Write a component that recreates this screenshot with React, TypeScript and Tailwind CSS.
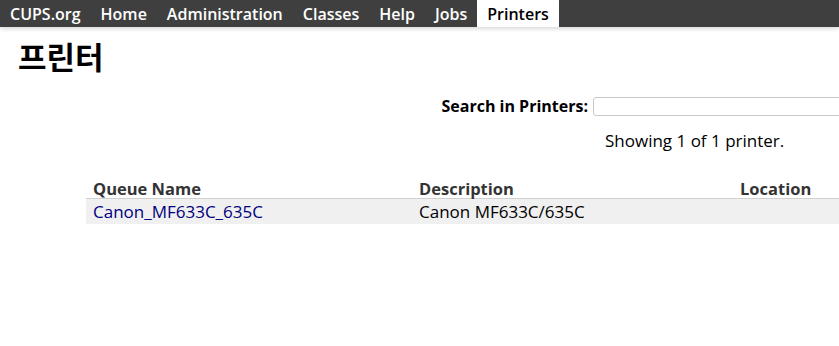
const navItems = [
  { label: "CUPS.org", href: "#" },
  { label: "Home", href: "#" },
  { label: "Administration", href: "#" },
  { label: "Classes", href: "#" },
  { label: "Help", href: "#" },
  { label: "Jobs", href: "#" },
  { label: "Printers", href: "#", active: true },
];

const printers = [
  { name: "Canon_MF633C_635C", description: "Canon MF633C/635C", location: "" },
];

export default function App() {
  return (
    <div
      className="w-full h-[346px] overflow-hidden bg-white text-[#000]"
      style={{ fontFamily: '"Open Sans", "Noto Sans CJK KR", sans-serif' }}
    >
      {/* Top nav */}
      <nav className="h-[27px] bg-[#3f3f3f] shadow-[0_2px_4px_rgba(0,0,0,0.15)] flex items-stretch">
        {navItems.map((item) => (
          <a
            key={item.label}
            href={item.href}
            className={`flex items-center px-[10px] text-[16px] font-semibold leading-none ${
              item.active ? "bg-white text-black" : "text-white"
            }`}
          >
            {item.label}
          </a>
        ))}
      </nav>

      {/* Page title */}
      <h1
        className="mt-[11px] ml-[18px] text-[31px] font-bold leading-[36px] text-black"
        style={{ fontFamily: '"Noto Sans CJK KR", sans-serif' }}
      >
        프린터
      </h1>

      {/* Search */}
      <div className="mt-[20px] flex items-center justify-end gap-[5px] -mr-[40px]">
        <label className="text-[16px] font-bold text-black">Search in Printers:</label>
        <input
          type="search"
          className="w-[286px] h-[19px] border border-[#c8c8c8] rounded-[3px] bg-white"
        />
      </div>

      {/* Count */}
      <p className="mt-[13px] ml-[605px] text-[17px] text-black leading-[20px] whitespace-nowrap">
        Showing 1 of 1 printer.
      </p>

      {/* Table */}
      <div className="mt-[26px] ml-[86px] w-[780px]">
        <div className="grid grid-cols-[326px_321px_1fr] border-b border-[#d0d0d0] h-[22px] items-center text-[16.5px] font-bold text-[#333]">
          <div className="pl-[7px]">Queue Name</div>
          <div className="pl-[7px]">Description</div>
          <div className="pl-[7px]">Location</div>
        </div>
        {printers.map((p) => (
          <div
            key={p.name}
            className="grid grid-cols-[326px_321px_1fr] bg-[#f0f0f0] h-[25px] items-center text-[17px]"
          >
            <div className="pl-[7px]">
              <a href="#" className="text-[#000080]">
                {p.name}
              </a>
            </div>
            <div className="pl-[7px] text-black">{p.description}</div>
            <div className="pl-[7px] text-black">{p.location}</div>
          </div>
        ))}
      </div>
    </div>
  );
}
